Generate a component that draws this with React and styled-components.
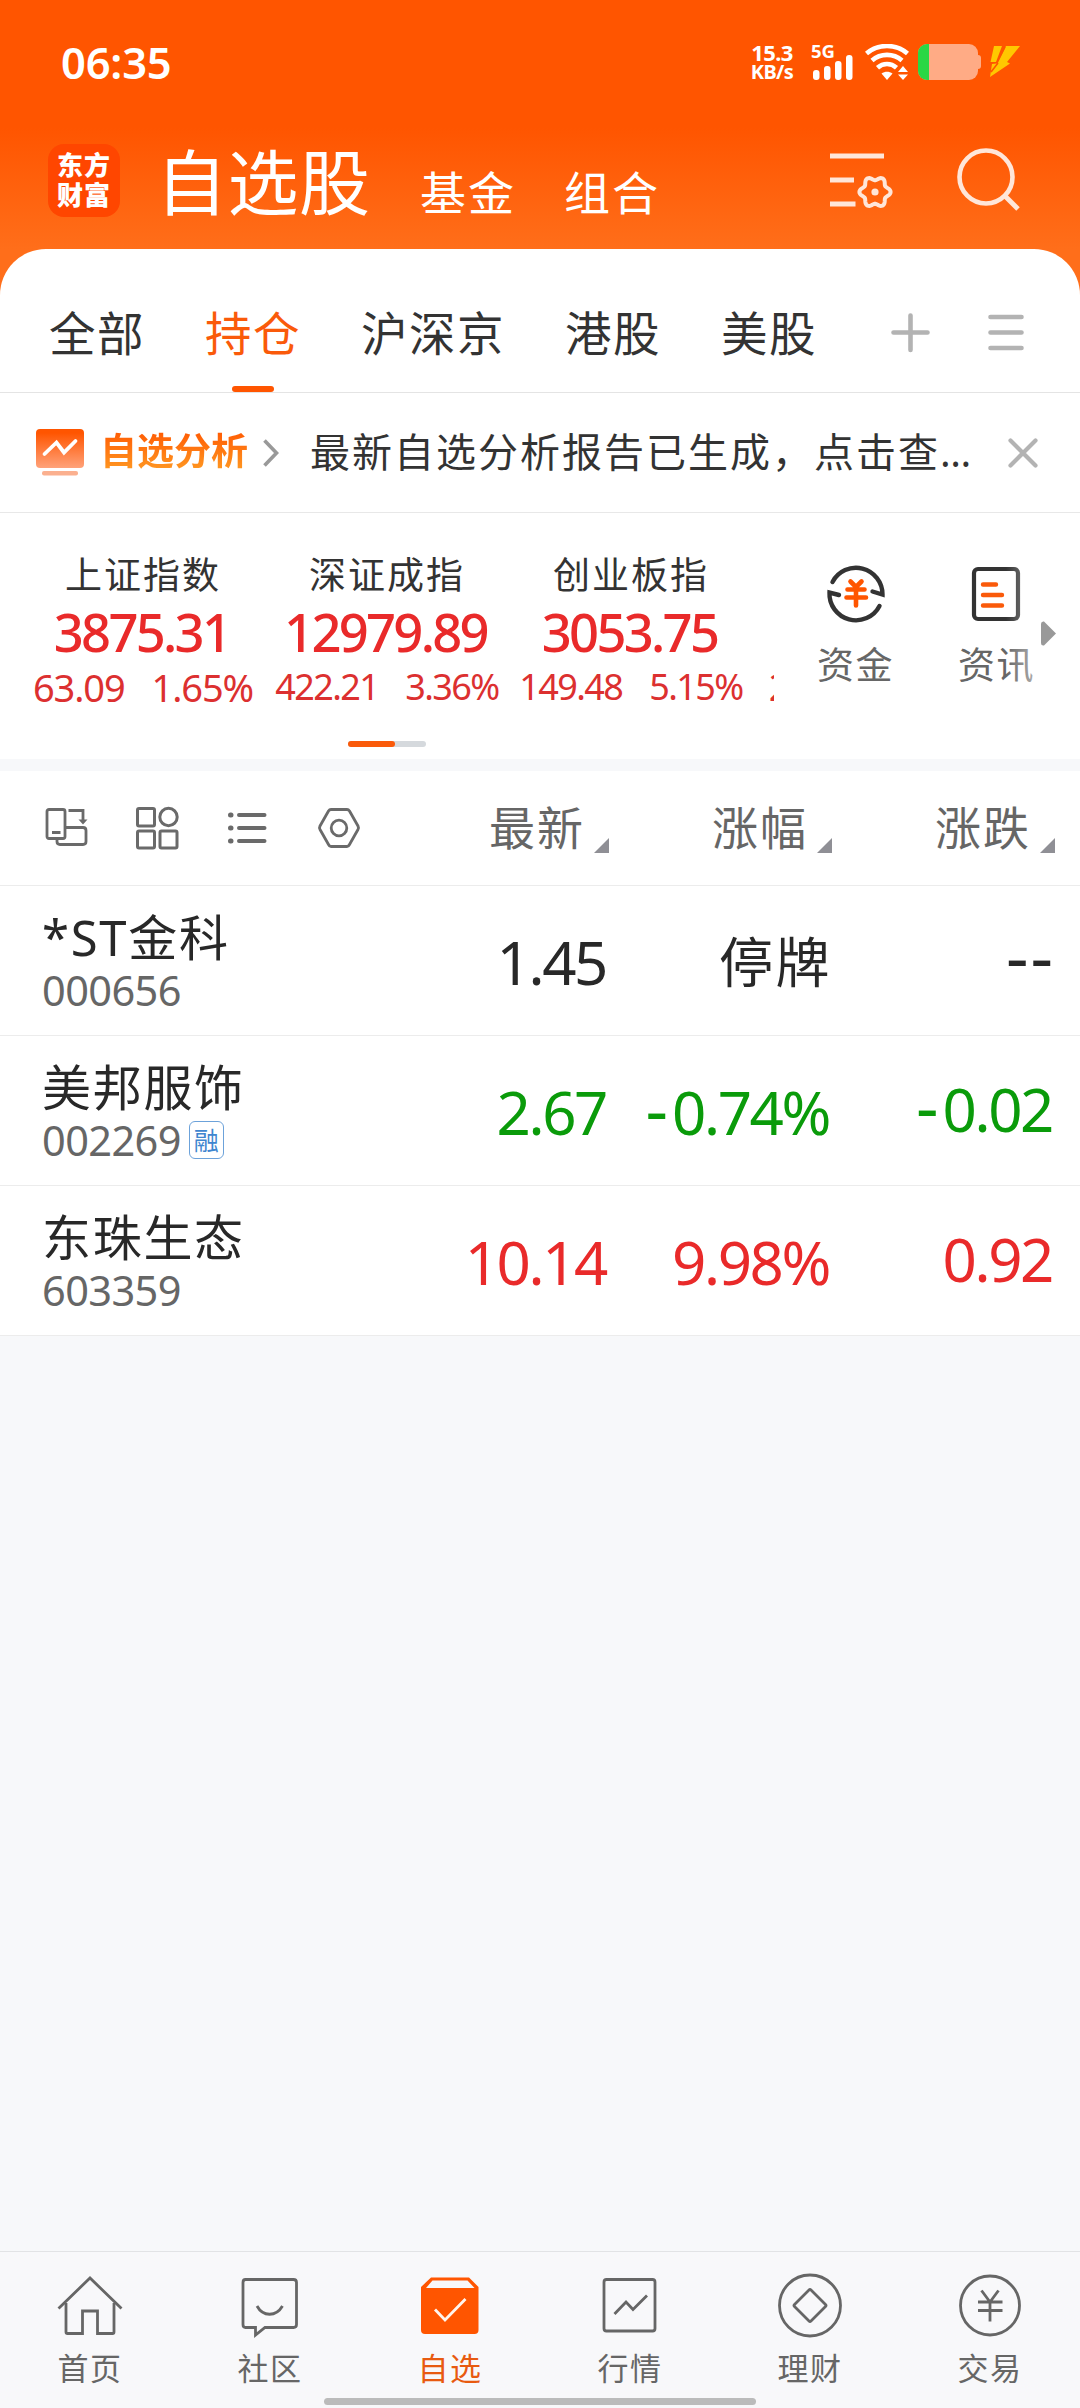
import React from 'react';
import styled, { createGlobalStyle, css } from 'styled-components';

const GlobalStyle = createGlobalStyle`
  * {
    box-sizing: border-box;
  }
  body {
    margin: 0;
    background: #f7f8fa;
    font-family: 'Noto Sans CJK SC', sans-serif;
    color: #333;
  }
  svg {
    display: block;
    flex: none;
  }
`;

const num = css`
  font-family: 'Noto Sans', 'Noto Sans CJK SC', sans-serif;
`;

const Screen = styled.div`
  width: 1080px;
  height: 2408px;
  display: flex;
  flex-direction: column;
  overflow: hidden;
`;

const Hero = styled.div`
  background: linear-gradient(#ff5500 0, #ff5500 128px, #ff6e1a 249px);
`;

/* ---------- status bar ---------- */

const StatusBar = styled.div`
  height: 123px;
  padding: 0 60px 0 61px;
  display: flex;
  align-items: center;
  justify-content: space-between;
  color: #fff;
`;

const Clock = styled.div`
  ${num}
  font-size: 43.5px;
  font-weight: 600;
  line-height: 60px;
  letter-spacing: -0.2px;
`;

const StatusRight = styled.div`
  display: flex;
  align-items: center;
`;

const Speed = styled.div`
  width: 44px;
  margin-right: 17px;
`;

const SpeedLine = styled.div`
  ${num}
  font-size: ${({ $size }) => $size}px;
  font-weight: 700;
  line-height: 19px;
  letter-spacing: -0.6px;
  text-align: center;
  white-space: nowrap;
`;

const Signal = styled.div`
  ${num}
  width: 54px;
  height: 36px;
  font-size: 18.5px;
  font-weight: 700;
  line-height: 14px;

  svg {
    margin: -4px 0 0 2px;
  }
`;

const BatteryGroup = styled.div`
  display: flex;
  align-items: center;
  gap: 9px;
  margin-left: 9px;
`;

/* ---------- title bar ---------- */

const TitleBar = styled.div`
  height: 126px;
  padding: 21px 59px 0 48px;
  display: flex;
  align-items: flex-start;
  color: #fff;
`;

const Logo = styled.div`
  width: 72px;
  height: 73px;
  border-radius: 16px;
  background: #ff4600;
  padding: 5px 0 0 9px;
  font-size: 26px;
  font-weight: 900;
  line-height: 30px;
  letter-spacing: 1px;
  white-space: pre;
`;

const BigTitle = styled.h1`
  margin: -4px 0 0 36px;
  width: 222px;
  font-size: 71px;
  font-weight: 400;
  line-height: 76px;
  letter-spacing: 0.5px;
  white-space: nowrap;
`;

const SubTitle = styled.div`
  margin: 18px 0 0 ${({ $gap }) => $gap}px;
  width: 96px;
  font-size: 46px;
  line-height: 56px;
  letter-spacing: 2px;
  white-space: nowrap;
`;

const TitleIcons = styled.div`
  margin-left: auto;
  display: flex;
  gap: 63px;
`;

/* ---------- tabs ---------- */

const Card = styled.div`
  background: #fff;
  border-radius: 46px 46px 0 0;
`;

const Tabs = styled.div`
  height: 144px;
  padding-left: 49px;
  display: flex;
  align-items: stretch;
  border-bottom: 1px solid #e4e4e4;
`;

const Tab = styled.div`
  margin-right: 60px;
  padding-top: 52px;
  display: flex;
  flex-direction: column;
  align-items: center;
  font-size: 46.5px;
  line-height: 60px;
  letter-spacing: 1.5px;
  color: ${({ $active }) => ($active ? '#fa5a0a' : '#333')};

  &::after {
    content: '';
    width: 42px;
    height: 6px;
    margin-top: auto;
    border-radius: 3px;
    background: ${({ $active }) => ($active ? '#ff5500' : 'transparent')};
  }
`;

const TabIcons = styled.div`
  margin: 64px 0 0 14px;
  display: flex;
  gap: 58px;
`;

/* ---------- analysis notice ---------- */

const Notice = styled.div`
  height: 120px;
  padding: 0 42px 0 36px;
  display: flex;
  align-items: center;
  border-bottom: 1px solid #e8e8e8;
`;

const NoticeTag = styled.div`
  margin: -7px 0 0 16px;
  width: 163px;
  font-size: 37px;
  font-weight: 700;
  line-height: 50px;
  white-space: nowrap;

  span {
    background: linear-gradient(#ff5500 10%, #ff9420 85%);
    background-clip: text;
    -webkit-background-clip: text;
    color: transparent;
  }
`;

const NoticeText = styled.div`
  ${num}
  margin: -2px 0 0 31px;
  width: 662px;
  font-size: 40px;
  line-height: 56px;
  letter-spacing: 2px;
  white-space: nowrap;
`;

const Dots = styled.span`
  letter-spacing: -0.5px;
`;

const CloseBox = styled.div`
  margin-left: auto;
`;

/* ---------- indices ---------- */

const Market = styled.div`
  height: 246px;
  display: flex;
`;

const IndexPane = styled.div`
  width: 774px;
  overflow: hidden;
`;

const IndexTrack = styled.div`
  display: flex;
  padding-left: 21px;
`;

const IndexCell = styled.div`
  flex: none;
  width: 244px;
  padding-top: 35px;
  display: flex;
  flex-direction: column;
  align-items: center;
  white-space: nowrap;
`;

const IndexName = styled.div`
  height: 50px;
  font-size: 37px;
  line-height: 50px;
  letter-spacing: 2px;
`;

const IndexValue = styled.div`
  ${num}
  height: 60px;
  font-size: 52.5px;
  font-weight: 500;
  line-height: 60px;
  letter-spacing: -2.7px;
  margin: 4px 3px 0 0;
  color: #e92a2a;
`;

const IndexDelta = styled.div`
  ${num}
  display: flex;
  gap: 27px;
  font-size: ${({ $size }) => $size}px;
  line-height: 44px;
  letter-spacing: ${({ $size }) => ($size < 38 ? -1.6 : -1.1)}px;
  margin: 3px 0 2px;
  color: #dc3030;
`;

const Pager = styled.div`
  width: 78px;
  height: 6px;
  margin: 30px 0 0 348px;
  border-radius: 3px;
  background: #d5d9dd;

  &::before {
    content: '';
    display: block;
    width: 47px;
    height: 6px;
    border-radius: 3px;
    background: #fa5a0a;
  }
`;

const Tools = styled.div`
  position: relative;
  flex: 1;
  display: flex;
  padding-left: 11px;
`;

const Tool = styled.div`
  width: 141px;
  padding-top: 50px;
  display: flex;
  flex-direction: column;
  align-items: center;
  font-size: 37px;
  line-height: 50px;
  letter-spacing: 1.5px;
  color: #666;

  svg {
    margin-bottom: 13px;
  }
`;

const Fade = styled.div`
  position: absolute;
  top: 40px;
  right: 40px;
  width: 34px;
  height: 150px;
  background: linear-gradient(90deg, rgba(255, 255, 255, 0), rgba(255, 255, 255, 0.55));
`;

const MoreArrow = styled.svg`
  position: absolute;
  top: 108px;
  right: 24px;
`;

const Divider = styled.div`
  height: 12px;
  background: #f7f8fa;
`;

/* ---------- stock table ---------- */

const grid = css`
  display: grid;
  grid-template-columns: 1fr 223px 223px 223px;
  padding-right: 25px;
  background: #fff;
`;

const TableHead = styled.div`
  ${grid}
  height: 115px;
  border-bottom: 1px solid #ececec;
`;

const ViewIcons = styled.div`
  padding: 35px 0 0 44px;
  display: flex;
  gap: 47px;
`;

const HeadCell = styled.div`
  padding-top: 26px;
  display: flex;
  justify-content: flex-end;
  align-items: flex-start;
  font-size: 46px;
  line-height: 56px;
  letter-spacing: 2px;
  color: #666;

  svg {
    margin: 41px 0 0 9px;
  }
`;

const Row = styled.div`
  ${grid}
  height: 150px;
  border-bottom: 1px solid #ececec;
`;

const NameCell = styled.div`
  padding: 19px 0 0 42px;
  color: #282828;
`;

const StockName = styled.div`
  ${num}
  font-size: 49px;
  line-height: 64px;
  letter-spacing: 1.7px;
  white-space: nowrap;
`;

const StockCode = styled.div`
  ${num}
  display: flex;
  align-items: center;
  margin-top: 1px;
  font-size: 41.5px;
  line-height: 40px;
  letter-spacing: -0.6px;
  color: #666;
`;

const MarginBadge = styled.span`
  width: 35px;
  height: 38px;
  margin-left: 8px;
  border: 1.5px solid #6ca2da;
  border-radius: 6px;
  font-family: 'Noto Sans CJK SC', sans-serif;
  font-size: 25px;
  line-height: 34px;
  letter-spacing: 0;
  text-align: center;
  color: #3f86cf;
`;

const tones = { flat: '#282828', down: '#0a9b0a', up: '#e92a2a' };

const Quote = styled.div`
  ${num}
  padding: ${({ $lift }) => ($lift ? 37 : 40)}px 3px 0 0;
  font-size: 60px;
  line-height: 72px;
  letter-spacing: -2.4px;
  text-align: right;
  white-space: nowrap;
  color: ${({ $tone }) => tones[$tone]};
`;

const Halted = styled(Quote)`
  padding-right: 0;
  font-size: 54px;
  letter-spacing: 2.5px;
`;

const Sign = styled.span`
  margin-right: ${({ $alone }) => ($alone ? -3 : 2)}px;
  font-size: 70px;
  line-height: 0;
  letter-spacing: 2px;
`;

/* ---------- bottom navigation ---------- */

const BottomNav = styled.div`
  margin-top: auto;
  height: 157px;
  border-top: 1px solid #e2e3e5;
  background: #f8f8fa;
`;

const NavItems = styled.div`
  display: flex;
  height: 146px;
`;

const NavItem = styled.div`
  width: 180px;
  padding-top: 20px;
  display: flex;
  flex-direction: column;
  align-items: center;
  font-size: 31px;
  line-height: 40px;
  letter-spacing: 1.4px;
  color: ${({ $active }) => ($active ? '#e85a10' : '#666')};

  svg {
    margin-bottom: 9px;
  }
`;

const HomeBar = styled.div`
  width: 432px;
  height: 7px;
  margin: 0 auto;
  border-radius: 4px;
  background: #bbb;
`;

/* ---------- icons ---------- */

const SignalBars = () => (
  <svg width="40" height="26" viewBox="0 0 40 26" fill="#fff">
    <rect x="0" y="16" width="6.5" height="10" rx="3" />
    <rect x="11" y="12" width="6.5" height="14" rx="3" />
    <rect x="22" y="7" width="6.5" height="19" rx="3" />
    <rect x="33" y="1" width="6.5" height="25" rx="3" />
  </svg>
);

const WifiIcon = () => (
  <svg width="44" height="36" viewBox="0 0 44 36" fill="none" stroke="#fff" strokeWidth="4.6">
    <path d="M1.5 9.5C13 -0.5 31 -0.5 42.5 9.5" />
    <path d="M7 16.5C15.5 9 28.5 9 37 16.5" />
    <path d="M12.5 23.8C18 18.8 26 18.8 31.5 23.8" />
    <path d="M16.5 29.5C20 27 24 27 27.5 29.5L22 36Z" fill="#fff" stroke="none" />
    <path d="M33 28L38 22L43 28ZM33 30.5L38 36L43 30.5Z" fill="#fff" stroke="none" />
  </svg>
);

const BatteryIcon = () => (
  <svg width="63" height="36" viewBox="0 0 63 36">
    <clipPath id="cell">
      <rect width="60" height="36" rx="9" />
    </clipPath>
    <rect x="56" y="11" width="7" height="14" rx="3" fill="#ffab85" />
    <rect width="60" height="36" rx="9" fill="#ffab85" />
    <rect width="11" height="36" fill="#29d745" clipPath="url(#cell)" />
  </svg>
);

const BoltIcon = () => (
  <svg width="30" height="31" viewBox="0 0 30 31" fill="#ffc800">
    <path d="M4 0H12L6 16H0.5Z" />
    <path d="M16 0H30L17 16L20 17.5L0 31L2 18L7 17.5Z" />
    <path d="M15 1L7 17M1 26L8 17" stroke="#ff5500" strokeWidth="1.6" />
  </svg>
);

// six-lobed outline around the origin
const gearPath = () => {
  const points = [];
  for (let a = 0; a < 360; a += 4) {
    const t = (a * Math.PI) / 180;
    const r = 13.7 + 1.9 * Math.cos(6 * t);
    points.push(`${(r * Math.cos(t)).toFixed(2)} ${(r * Math.sin(t)).toFixed(2)}`);
  }
  return `M${points.join('L')}Z`;
};

const ListGearIcon = () => (
  <svg width="64" height="68" viewBox="0 0 64 68" fill="none" stroke="#ffe6d9" strokeWidth="5">
    <path d="M0 12H54M0 36H24M0 60H25.5" />
    <g transform="translate(45 48)">
      <path d={gearPath()} strokeWidth="4" />
      <circle r="3.6" fill="#ffe6d9" stroke="none" />
    </g>
  </svg>
);

const SearchIcon = () => (
  <svg width="64" height="68" viewBox="0 0 64 68" fill="none" stroke="#ffe6d9" strokeWidth="4.6">
    <circle cx="29" cy="33" r="26.5" />
    <path d="M48 52L61 65" strokeWidth="5" />
  </svg>
);

const PlusIcon = () => (
  <svg width="39" height="40" viewBox="0 0 39 40" stroke="#b3b3b3" strokeWidth="4.6" strokeLinecap="round">
    <path d="M2.5 19.5H36.5M19.5 2.5V37" />
  </svg>
);

const MenuIcon = () => (
  <svg width="36" height="40" viewBox="0 0 36 40" stroke="#b3b3b3" strokeWidth="4.6" strokeLinecap="round">
    <path d="M2.5 4H33.5M2.5 19.5H33.5M2.5 35H33.5" />
  </svg>
);

const AnalysisIcon = () => (
  <svg width="48" height="47" viewBox="0 0 48 47" fill="none">
    <defs>
      <linearGradient id="board" x1="0" y1="0" x2="0" y2="1">
        <stop offset="0.1" stopColor="#ff5500" />
        <stop offset="1" stopColor="#ffa27a" />
      </linearGradient>
    </defs>
    <rect width="48" height="39" rx="4" fill="url(#board)" />
    <rect x="6" y="42" width="36" height="4.5" rx="2" fill="#fbb08f" />
    <path d="M8.5 25L20.5 13.5L28 23.5L39.5 12" stroke="#fff" strokeWidth="3.8" strokeLinecap="round" />
  </svg>
);

const ChevronIcon = () => (
  <svg width="16" height="28" viewBox="0 0 16 28" fill="none" stroke="#999" strokeWidth="3.6">
    <path d="M1.5 1.5L13.5 14L1.5 26.5" />
  </svg>
);

const CloseIcon = () => (
  <svg width="30" height="30" viewBox="0 0 30 30" stroke="#b3b3b3" strokeWidth="4.2" strokeLinecap="round">
    <path d="M2.5 2.5L27.5 27.5M27.5 2.5L2.5 27.5" />
  </svg>
);

const FundsIcon = () => (
  <svg width="60" height="62" viewBox="0 0 60 62" fill="none" stroke="#333" strokeWidth="4.4" strokeLinecap="round">
    <path d="M6.5 19A26.5 26.5 0 0 1 56.5 31.5L46.5 28.5" />
    <path d="M53.5 43A26.5 26.5 0 0 1 3.5 29.5L13 32" />
    <path d="M24.5 18.5L30 24L35.5 18.5M21.5 26.5H38.5M20.5 34.5H40M30 24V42.5" stroke="#ff5500" strokeWidth="4.6" />
  </svg>
);

const NewsIcon = () => (
  <svg width="60" height="62" viewBox="0 0 60 62" fill="none" stroke="#333" strokeWidth="4.2" strokeLinecap="round">
    <rect x="7" y="6" width="44" height="50" rx="4" />
    <path d="M16 21.5H29M16 32H35M16 42.5H35" stroke="#fa5a0a" strokeWidth="4.4" />
  </svg>
);

const DeviceIcon = () => (
  <svg width="44" height="44" viewBox="0 0 44 44" fill="none" stroke="#6a6a6a" strokeWidth="2.8">
    <rect x="3" y="3.5" width="18" height="29" rx="2" />
    <path d="M8 26.5H16.5M24.5 4.5H39V15M21 21.5H39Q42 21.5 42 24.5V35.5Q42 38.5 39 38.5H16Q13 38.5 13 35.5V33" />
    <path d="M34.5 13.5H43.5L39 18.5Z" fill="#6a6a6a" stroke="none" />
  </svg>
);

const GridIcon = () => (
  <svg width="44" height="44" viewBox="0 0 44 44" fill="none" stroke="#6a6a6a" strokeWidth="3">
    <rect x="2.5" y="2.5" width="17" height="17.5" rx="1.5" />
    <circle cx="33.5" cy="11" r="8.7" />
    <rect x="2.5" y="25" width="17" height="17" rx="1.5" />
    <rect x="25" y="25" width="17" height="17" rx="1.5" />
  </svg>
);

const BulletsIcon = () => (
  <svg width="44" height="44" viewBox="0 0 44 44" stroke="#6a6a6a" strokeWidth="4" strokeLinecap="round">
    <path d="M13 9H38.5M13 22H38.5M13 35H38.5" />
    <path d="M4.5 9H5M4.5 22H5M4.5 35H5" strokeWidth="5" />
  </svg>
);

const HexIcon = () => (
  <svg width="44" height="44" viewBox="0 0 44 44" fill="none" stroke="#6a6a6a" strokeWidth="2.8" strokeLinejoin="round">
    <path d="M14 3.5H30Q31.5 3.5 32.5 5L41 20Q42 22 41 23.5L32.5 38.5Q31.5 40.5 30 40.5H14Q12.5 40.5 11.5 38.5L3 23.5Q2 22 3 20L11.5 5Q12.5 3.5 14 3.5Z" />
    <circle cx="22" cy="22" r="7.8" />
  </svg>
);

const SortMark = () => (
  <svg width="15" height="15" viewBox="0 0 15 15">
    <path d="M15 0V15H0Z" fill="#8f8f95" />
  </svg>
);

const NavIcon = ({ children }) => (
  <svg width="66" height="66" viewBox="0 0 66 66" fill="none" stroke="#666" strokeWidth="2.8">
    {children}
  </svg>
);

const navItems = [
  {
    label: '首页',
    icon: (
      <>
        <path d="M1.5 36.5L33 6L64.5 36.5" />
        <path d="M9 31V60Q9 61.5 10.5 61.5H25.5V39H40.5V61.5H55.5Q57 61.5 57 60V31" />
      </>
    ),
  },
  {
    label: '社区',
    icon: (
      <>
        <path d="M8.5 7.5H56.5Q59.5 7.5 59.5 10.5V52.5Q59.5 55.5 56.5 55.5H28L18.5 63V55.5H8.5Q6 55.5 6 52.5V10.5Q6 7.5 8.5 7.5Z" />
        <path d="M20 34C26 45 39 45 45.5 34" />
      </>
    ),
  },
  {
    label: '自选',
    active: true,
    icon: (
      <>
        <path d="M14 5.5H52L61.5 15V58Q61.5 62 57.5 62H8Q4 62 4 58V15Z" fill="#ff5500" stroke="none" />
        <path d="M15.5 8.5H50.5L57.5 16H9Z" fill="#f8f8fa" stroke="none" />
        <path d="M18 37.5L28 48L48.5 27" stroke="#fff5ee" />
      </>
    ),
  },
  {
    label: '行情',
    icon: (
      <>
        <rect x="7" y="7.5" width="51" height="51.5" rx="2.5" />
        <path d="M17.5 42L29 30L36 37.5L50 23.5" />
      </>
    ),
  },
  {
    label: '理财',
    icon: (
      <>
        <circle cx="33" cy="33.5" r="30.5" />
        <path d="M32 18Q33 17 34 18L48.5 32.5Q49.5 33.5 48.5 34.5L34 49Q33 50 32 49L17.5 34.5Q16.5 33.5 17.5 32.5Z" />
      </>
    ),
  },
  {
    label: '交易',
    icon: (
      <>
        <circle cx="33" cy="33.5" r="29.5" />
        <path d="M24.5 18.5L33 30L41.5 18.5M21 30H45.5M21 38.5H45.5M33 30V49.5" />
      </>
    ),
  },
];

/* ---------- data ---------- */

const tabs = ['全部', '持仓', '沪深京', '港股', '美股'];

const indices = [
  { name: '上证指数', value: '3875.31', delta: '63.09', pct: '1.65%', size: 38 },
  { name: '深证成指', value: '12979.89', delta: '422.21', pct: '3.36%', size: 36 },
  { name: '创业板指', value: '3053.75', delta: '149.48', pct: '5.15%', size: 36 },
];

const stocks = [
  { name: '*ST金科', code: '000656', price: '1.45', pct: '停牌', diff: '--', tone: 'flat', halted: true },
  { name: '美邦服饰', code: '002269', price: '2.67', pct: '-0.74%', diff: '-0.02', tone: 'down', margin: true },
  { name: '东珠生态', code: '603359', price: '10.14', pct: '9.98%', diff: '0.92', tone: 'up' },
];

const IndexItem = ({ name, value, delta, pct, size }) => (
  <IndexCell>
    <IndexName>{name}</IndexName>
    <IndexValue>{value}</IndexValue>
    <IndexDelta $size={size}>
      <span>{delta}</span>
      <span>{pct}</span>
    </IndexDelta>
  </IndexCell>
);

const Figure = ({ text }) => {
  const [, sign, rest] = text.match(/^(-*)(.*)$/);
  return (
    <>
      {sign && <Sign $alone={!rest}>{sign}</Sign>}
      {rest}
    </>
  );
};

const StockRow = ({ name, code, price, pct, diff, tone, halted, margin }) => (
  <Row>
    <NameCell>
      <StockName>{name}</StockName>
      <StockCode>
        {code}
        {margin && <MarginBadge>融</MarginBadge>}
      </StockCode>
    </NameCell>
    <Quote $tone={tone}>{price}</Quote>
    {halted ? (
      <Halted $tone={tone}>{pct}</Halted>
    ) : (
      <Quote $tone={tone}>
        <Figure text={pct} />
      </Quote>
    )}
    <Quote $tone={tone} $lift>
      <Figure text={diff} />
    </Quote>
  </Row>
);

const App = () => (
  <Screen>
    <GlobalStyle />
    <Hero>
      <StatusBar>
        <Clock>06:35</Clock>
        <StatusRight>
          <Speed>
            <SpeedLine $size={22}>15.3</SpeedLine>
            <SpeedLine $size={20}>KB/s</SpeedLine>
          </Speed>
          <Signal>
            5G
            <SignalBars />
          </Signal>
          <WifiIcon />
          <BatteryGroup>
            <BatteryIcon />
            <BoltIcon />
          </BatteryGroup>
        </StatusRight>
      </StatusBar>
      <TitleBar>
        <Logo>{'东方\n财富'}</Logo>
        <BigTitle>自选股</BigTitle>
        <SubTitle $gap={42}>基金</SubTitle>
        <SubTitle $gap={48}>组合</SubTitle>
        <TitleIcons>
          <ListGearIcon />
          <SearchIcon />
        </TitleIcons>
      </TitleBar>
      <Card>
        <Tabs>
          {tabs.map((t) => (
            <Tab key={t} $active={t === '持仓'}>
              {t}
            </Tab>
          ))}
          <TabIcons>
            <PlusIcon />
            <MenuIcon />
          </TabIcons>
        </Tabs>
        <Notice>
          <AnalysisIcon />
          <NoticeTag>
            <span>自选分析</span>
          </NoticeTag>
          <ChevronIcon />
          <NoticeText>
            最新自选分析报告已生成，点击查<Dots>...</Dots>
          </NoticeText>
          <CloseBox>
            <CloseIcon />
          </CloseBox>
        </Notice>
        <Market>
          <IndexPane>
            <IndexTrack>
              {indices.map((i) => (
                <IndexItem key={i.name} {...i} />
              ))}
              <IndexItem delta="25.16" pct="1.98%" size={37.5} />
            </IndexTrack>
            <Pager />
          </IndexPane>
          <Tools>
            <Tool>
              <FundsIcon />
              资金
            </Tool>
            <Tool>
              <NewsIcon />
              资讯
            </Tool>
            <Fade />
            <MoreArrow width="15" height="25" viewBox="0 0 15 25">
              <path d="M0 3Q0 0 3 0.5L15 12.5L3 24.5Q0 25 0 22Z" fill="#999" />
            </MoreArrow>
          </Tools>
        </Market>
      </Card>
    </Hero>
    <Divider />
    <TableHead>
      <ViewIcons>
        <DeviceIcon />
        <GridIcon />
        <BulletsIcon />
        <HexIcon />
      </ViewIcons>
      {['最新', '涨幅', '涨跌'].map((h) => (
        <HeadCell key={h}>
          {h}
          <SortMark />
        </HeadCell>
      ))}
    </TableHead>
    {stocks.map((s) => (
      <StockRow key={s.code} {...s} />
    ))}
    <BottomNav>
      <NavItems>
        {navItems.map(({ label, icon, active }) => (
          <NavItem key={label} $active={active}>
            <NavIcon>{icon}</NavIcon>
            {label}
          </NavItem>
        ))}
      </NavItems>
      <HomeBar />
    </BottomNav>
  </Screen>
);

export default App;
